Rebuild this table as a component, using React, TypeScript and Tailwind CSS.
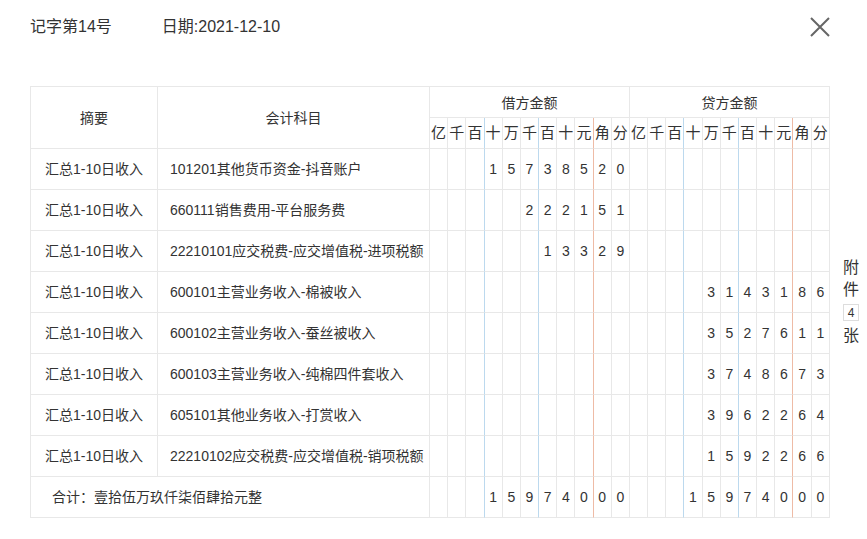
import React from "react"

// 记账凭证 - 借贷金额分栏表

const UNITS = ["亿", "千", "百", "十", "万", "千", "百", "十", "元", "角", "分"]

const rows: [string, string, string, string][] = [
  ["汇总1-10日收入", "101201其他货币资金-抖音账户", "15738520", ""],
  ["汇总1-10日收入", "660111销售费用-平台服务费", "222151", ""],
  ["汇总1-10日收入", "22210101应交税费-应交增值税-进项税额", "13329", ""],
  ["汇总1-10日收入", "600101主营业务收入-棉被收入", "", "3143186"],
  ["汇总1-10日收入", "600102主营业务收入-蚕丝被收入", "", "3527611"],
  ["汇总1-10日收入", "600103主营业务收入-纯棉四件套收入", "", "3748673"],
  ["汇总1-10日收入", "605101其他业务收入-打赏收入", "", "3962264"],
  ["汇总1-10日收入", "22210102应交税费-应交增值税-销项税额", "", "1592266"],
]

const lineColor = (i: number) =>
  i === 2 || i === 5 ? "border-r-[#bcd9ee]" : i === 8 ? "border-r-[#eebba6]" : "border-r-[#e8e8e8]"

function Digits({ value }: { value: string }) {
  const slots = value.padStart(11, " ").split("")
  return (
    <>
      {slots.map((d, i) => (
        <td key={i} className={`border-b border-r border-b-[#e8e8e8] ${lineColor(i)} p-0 text-center text-[14px]`}>
          {d.trim()}
        </td>
      ))}
    </>
  )
}

function CloseIcon() {
  return (
    <svg width="20" height="20" viewBox="0 0 20 20" className="block">
      <path d="M1 1 L19 19 M19 1 L1 19" stroke="#666" strokeWidth="2" fill="none" />
    </svg>
  )
}

export default function App() {
  const cell = "border-b border-r border-[#e8e8e8]"

  return (
    <div
      className="w-[867px] min-h-[539px] bg-white pl-[30px] text-[#333]"
      style={{ fontFamily: '"Liberation Sans", "Noto Sans CJK SC", sans-serif' }}
    >
      {/* 顶部 */}
      <div className="flex h-[54px] items-center pr-[37px] text-[16px]">
        <span>记字第14号</span>
        <span className="ml-[50px]">日期:2021-12-10</span>
        <button className="ml-auto">
          <CloseIcon />
        </button>
      </div>

      <div className="mt-[32px] flex">
        <table className="w-[800px] shrink-0 table-fixed border-separate border-spacing-0 border-l border-t border-[#e8e8e8]">
          <colgroup>
            <col className="w-[127px]" />
            <col className="w-[272px]" />
          </colgroup>
          <thead>
            <tr className="h-[31px] text-[14px]">
              <th rowSpan={2} className={`${cell} pt-[2px] font-normal`}>摘要</th>
              <th rowSpan={2} className={`${cell} pt-[2px] font-normal`}>会计科目</th>
              <th colSpan={11} className={`${cell} pt-[2px] font-normal`}>借方金额</th>
              <th colSpan={11} className={`${cell} pt-[2px] font-normal`}>贷方金额</th>
            </tr>
            <tr className="h-[31px] text-[15px]">
              {[...UNITS, ...UNITS].map((u, i) => (
                <th key={i} className={`border-b border-r border-b-[#e8e8e8] ${lineColor(i % 11)} p-0 font-normal`}>
                  {u}
                </th>
              ))}
            </tr>
          </thead>
          <tbody>
            {rows.map((r, idx) => (
              <tr key={idx} className="h-[41px]">
                <td className={`${cell} pt-[1px] text-center text-[14px]`}>{r[0]}</td>
                <td className={`${cell} whitespace-nowrap pl-[12px] pt-[1px] text-[14px]`}>{r[1]}</td>
                <Digits value={r[2]} />
                <Digits value={r[3]} />
              </tr>
            ))}
            <tr className="h-[41px]">
              <td colSpan={2} className={`${cell} pl-[21px] text-[14px]`}>
                合计：壹拾伍万玖仟柒佰肆拾元整
              </td>
              <Digits value="15974000" />
              <Digits value="15974000" />
            </tr>
          </tbody>
        </table>

        {/* 附件 */}
        <div className="flex w-[37px] shrink-0 flex-col items-center justify-center pl-[5px] text-[16px] leading-[22px]">
          <span className="block">附</span>
          <span className="block">件</span>
          <span className="mb-[4px] mt-[3px] flex h-[17px] w-[16px] items-center justify-center border border-[#ddd] text-[12px] leading-none">
            4
          </span>
          <span className="block">张</span>
        </div>
      </div>
    </div>
  )
}
